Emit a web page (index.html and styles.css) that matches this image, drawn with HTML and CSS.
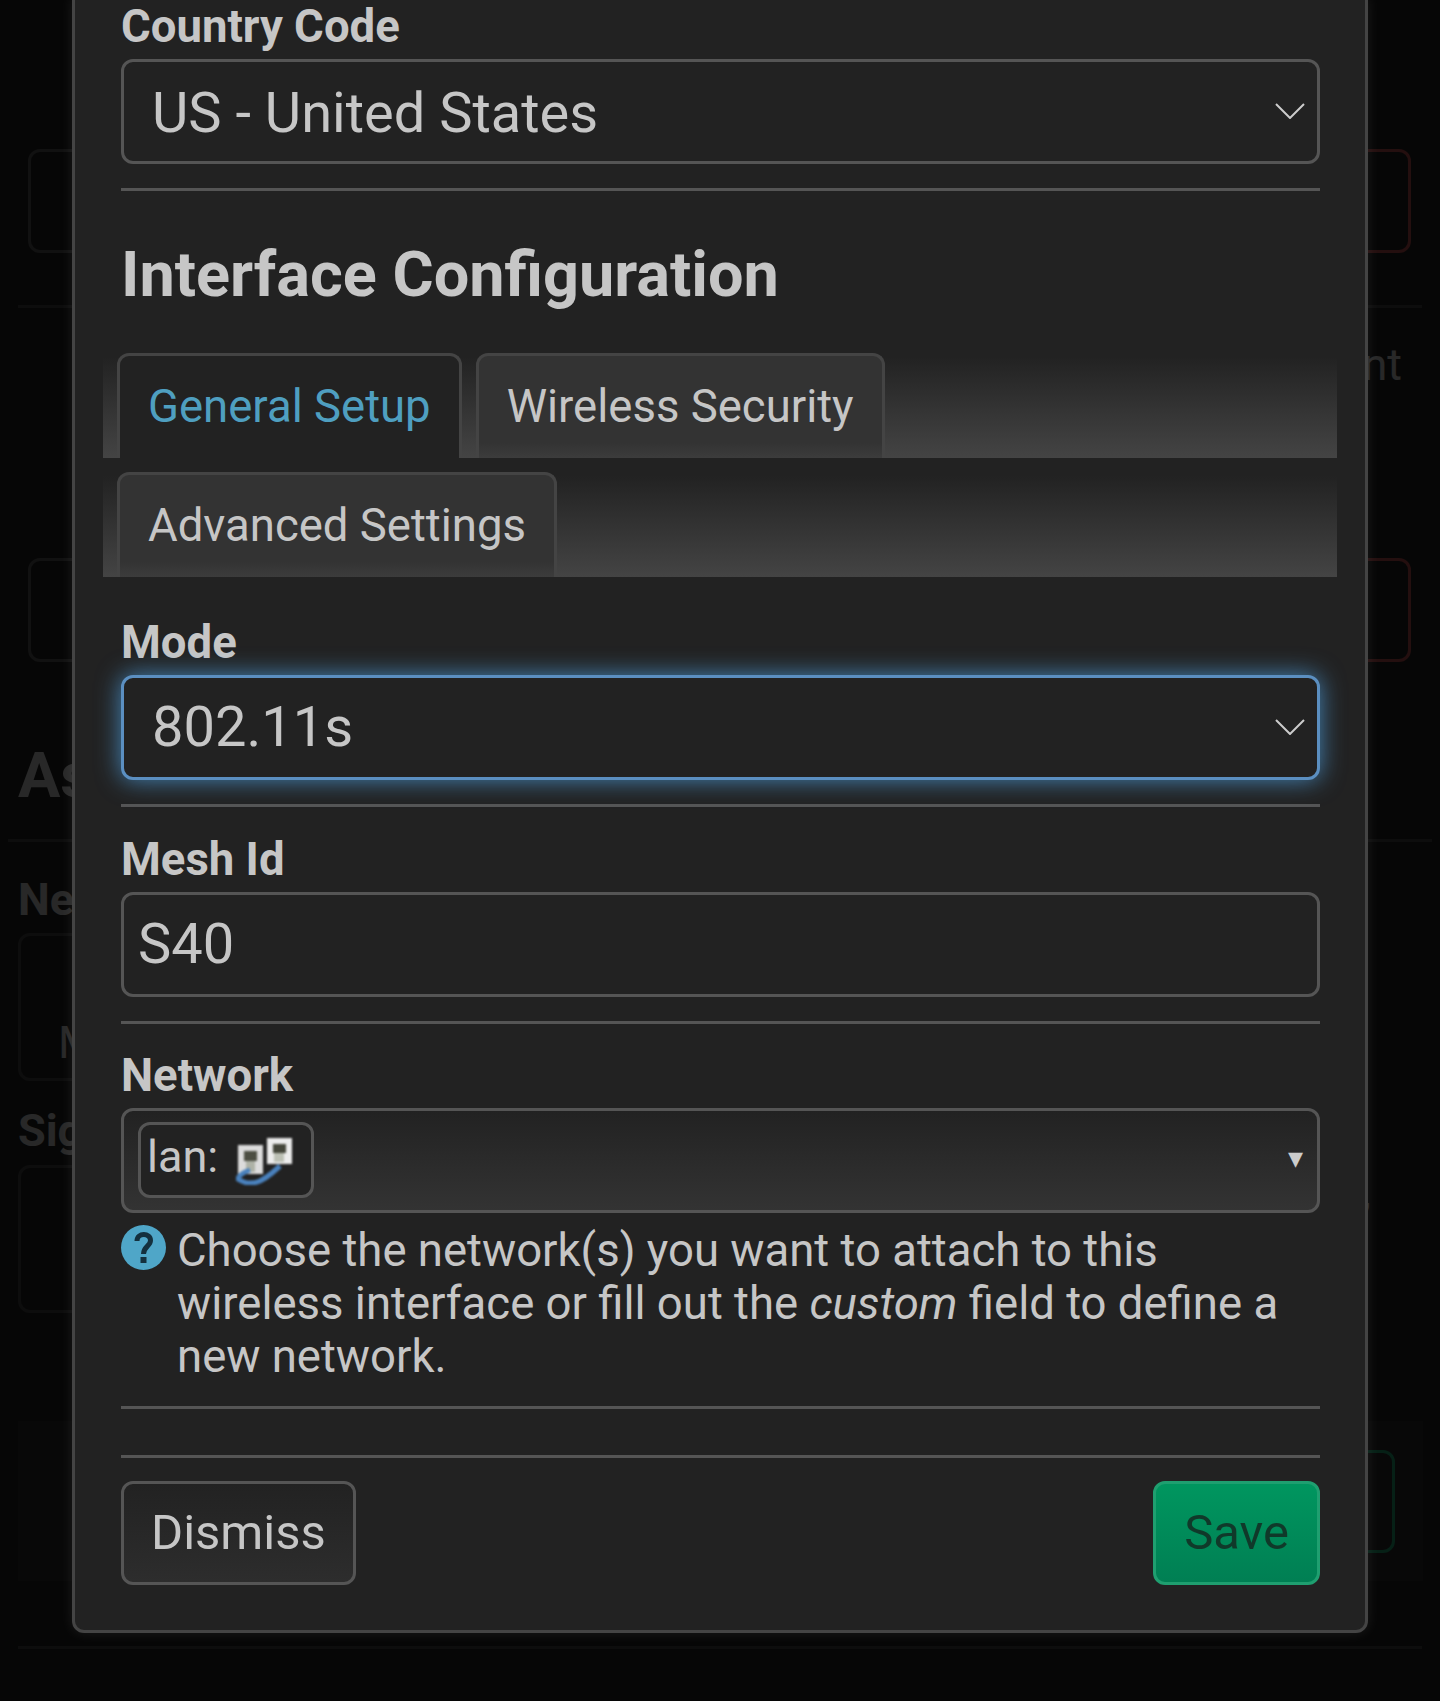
FILE: index.html
```html
<!DOCTYPE html>
<html lang="en">
<head>
<meta charset="utf-8">
<title>Interface Configuration</title>
<link rel="stylesheet" href="styles.css">
</head>
<body>
<div class="page">
  <div class="ghost-row ghost-row-first"><div class="ghost-box"></div><div class="ghost-box ghost-red"></div></div>
  <div class="ghost-rule"></div>
  <div class="ghost-text">Management</div>
  <div class="ghost-row ghost-row-second"><div class="ghost-box"></div><div class="ghost-box ghost-red"></div></div>
  <h2 class="ghost-heading">Associated Stations</h2>
  <div class="ghost-rule ghost-rule-wide"></div>
  <div class="ghost-label">Network</div>
  <div class="ghost-panel"><span class="ghost-m">Master</span></div>
  <div class="ghost-label ghost-label-sig">Signal</div>
  <div class="ghost-panel ghost-panel-sig"><span class="ghost-comma">,</span></div>
  <div class="ghost-footer"><div class="ghost-save"></div></div>
  <div class="ghost-rule ghost-rule-end"></div>
</div>

<div class="overlay"></div>

<div class="modal">
  <div class="field field-first">
    <label class="label">Country Code</label>
    <div class="control select"><span>US - United States</span>
      <svg class="chev" viewBox="0 0 30 16"><path d="M1 1 L15 15 L29 1"/></svg>
    </div>
  </div>
  <div class="rule"></div>

  <h3 class="section-title">Interface Configuration</h3>

  <ul class="tabs">
    <li class="tab tab-active">General Setup</li>
    <li class="tab">Wireless Security</li>
  </ul>
  <ul class="tabs tabs-second">
    <li class="tab">Advanced Settings</li>
  </ul>

  <div class="field field-mode">
    <label class="label">Mode</label>
    <div class="control select focus"><span>802.11s</span>
      <svg class="chev" viewBox="0 0 30 16"><path d="M1 1 L15 15 L29 1"/></svg>
    </div>
  </div>
  <div class="rule"></div>

  <div class="field">
    <label class="label">Mesh Id</label>
    <div class="control text-input"><span>S40</span></div>
  </div>
  <div class="rule"></div>

  <div class="field">
    <label class="label">Network</label>
    <div class="control dropdown">
      <div class="pill">
        <span class="pill-text">lan:</span>
        <svg class="lan-icon" viewBox="0 0 58 48">
          <rect x="2" y="8" width="25" height="29" fill="#dcdcdc"/>
          <rect x="31" y="1" width="25" height="26" fill="#ececec"/>
          <rect x="8" y="14" width="13" height="10" fill="#4c4e42"/>
          <rect x="37" y="7" width="13" height="9" fill="#44463a"/>
          <rect x="10" y="24" width="9" height="11" fill="#aeb2a6"/>
          <rect x="38" y="16" width="10" height="9" fill="#bcc0b4"/>
          <path d="M14 33 Q3 37 2 42 Q12 49 24 44 Q30 41 36 36 L44 29" fill="none" stroke="#4a82be" stroke-width="5"/>
        </svg>
      </div>
      <span class="caret">▾</span>
    </div>
  </div>
  <div class="help">
    <svg class="help-icon" viewBox="0 0 45 45">
      <circle cx="22.5" cy="22.5" r="22.5" fill="#4fa6c8"/>
      <path d="M16 16 C16 7.5 29.5 7.5 29.5 15.5 C29.5 21 22.5 21.5 22.5 29" fill="none" stroke="#14303e" stroke-width="5"/>
      <rect x="19.5" y="32" width="6" height="6" fill="#14303e"/>
    </svg>
    <p class="help-text">Choose the network(s) you want to attach to this wireless interface or fill out the <em>custom</em> field to define a new network.</p>
  </div>
  <div class="rule rule-help"></div>

  <div class="rule rule-footer"></div>
  <div class="actions">
    <button class="btn">Dismiss</button>
    <button class="btn btn-save">Save</button>
  </div>
</div>
</body>
</html>
```
FILE: styles.css
```css
* { box-sizing: border-box; }
html, body { margin: 0; padding: 0; }
body {
  width: 1440px;
  height: 1701px;
  overflow: hidden;
  position: relative;
  background: #222;
  font-family: Roboto, "Liberation Sans", sans-serif;
  color: #c6c6c6;
}

/* page behind the dialog */
.page { padding: 149px 0 0 18px; width: 1440px; }
.ghost-row { display: flex; justify-content: space-between; margin-left: 10px; width: 1383px; }
.ghost-box { width: 120px; height: 104px; border: 3px solid #555; border-radius: 12px; }
.ghost-red { border-color: #b34a4a; }
.ghost-rule { height: 3px; background: #444; margin-top: 52px; width: 1404px; }
.ghost-text { text-align: right; font-size: 45px; line-height: 54px; margin-top: 30px; width: 1384px; white-space: nowrap; }
.ghost-row-second { margin-top: 166px; }
.ghost-heading { font-size: 63px; line-height: 76px; margin: 76px 0 0; font-weight: 700; white-space: nowrap; }
.ghost-rule-wide { margin: 25px 0 0 -10px; width: 1424px; }
.ghost-label { font-size: 45px; font-weight: 700; line-height: 54px; margin-top: 31px; }
.ghost-label-sig { margin-top: 23px; }
.ghost-panel { height: 148px; border: 3px solid #444; border-radius: 12px; margin-top: 6px; width: 1300px; padding: 80px 0 0 37px; font-size: 45px; line-height: 54px; position: relative; }
.ghost-panel-sig { margin-top: 7px; padding: 0; }
.ghost-comma { position: absolute; left: 1341px; top: -2px; }
.ghost-footer { height: 160px; margin-top: 108px; width: 1405px; background: #2a2a2a; padding: 29px 28px 0 0; display: flex; justify-content: flex-end; }
.ghost-save { width: 200px; height: 103px; border: 3px solid #1f9f70; border-radius: 12px; }
.ghost-rule-end { margin-top: 65px; }

.overlay { position: absolute; inset: 0; background: rgba(0, 0, 0, .8); }

/* dialog */
.modal {
  position: absolute;
  left: 72px;
  top: -3px;
  width: 1296px;
  height: 1636px;
  background: #222;
  border: 3px solid #444;
  border-radius: 0 0 12px 12px;
  box-shadow: 0 0 14px rgba(255, 255, 255, .09);
  padding: 0 45px 0 46px;
}
.field { margin-top: 25.5px; }
.field-first { margin-top: 0; }
.label { display: block; font-size: 45.5px; font-weight: 700; line-height: 54px; margin-bottom: 5px; }
.control {
  position: relative;
  height: 105px;
  border: 3px solid #555;
  border-radius: 12px;
  font-size: 56px;
  line-height: 99px;
  background: #222;
  white-space: nowrap;
}
.select { padding-left: 28px; }
.field-first .select { padding-top: 2px; }
.text-input { padding-left: 14px; }
.focus { border-color: #5b8fc1; box-shadow: 0 0 24px rgba(82, 168, 236, .75); }
.chev { position: absolute; right: 12px; top: 41px; width: 30px; height: 16px; fill: none; stroke: #ccc; stroke-width: 2; }

.rule { height: 3px; background: #555; margin-top: 24px; }

.section-title { font-size: 63px; font-weight: 700; line-height: 76px; margin: 46px 0 0; }

.tabs {
  list-style: none;
  display: flex;
  gap: 14px;
  margin: 26px -17px 0 -18px;
  padding: 14px 0 0 14px;
  height: 119px;
  background: linear-gradient(#222 15%, #444);
}
.tabs-second { margin-top: 0; }
.tab {
  height: 105px;
  padding: 0 28px;
  border: 3px solid #444;
  border-bottom: 0;
  border-radius: 12px 12px 0 0;
  background: linear-gradient(#333 85%, #3c3c3c);
  font-size: 45.5px;
  line-height: 102px;
  white-space: nowrap;
}
.tab-active { background: #222; color: #4f9fc0; }

.field-mode { margin-top: 39px; }

.dropdown { background: linear-gradient(#222, #333); padding: 11px 0 0 14px; }
.pill {
  display: flex;
  align-items: center;
  width: 176px;
  height: 76px;
  padding: 0 6px;
  gap: 18px;
  border: 3px solid #555;
  border-radius: 12px;
  background: #222;
  font-size: 45px;
  line-height: 64px;
}
.pill-text { margin-top: -6px; }
.lan-icon { width: 58px; height: 48px; filter: blur(1.1px); margin-top: 2px; }
.caret { position: absolute; right: 14px; top: 29px; font-size: 30px; line-height: 36px; color: #ccc; }

.help { display: flex; gap: 11px; margin-top: 12px; }
.help-icon { width: 45px; height: 45px; flex: none; }
.help-text { margin: -1px 0 0; font-size: 45.5px; line-height: 53px; }

.rule-help { margin-top: 23px; }
.rule-footer { margin-top: 46px; }

.actions { display: flex; justify-content: space-between; margin-top: 23px; }
.btn {
  height: 104px;
  padding: 0 27px 2px;
  border: 3px solid #555;
  border-radius: 12px;
  background: linear-gradient(#222, #2d2d2d);
  color: #c6c6c6;
  font: 49px Roboto, sans-serif;
}
.btn-save {
  padding: 0 28px 2px;
  background: linear-gradient(#00965f, #007f53);
  border-color: #1f9f70;
  color: #10392a;
}
```
